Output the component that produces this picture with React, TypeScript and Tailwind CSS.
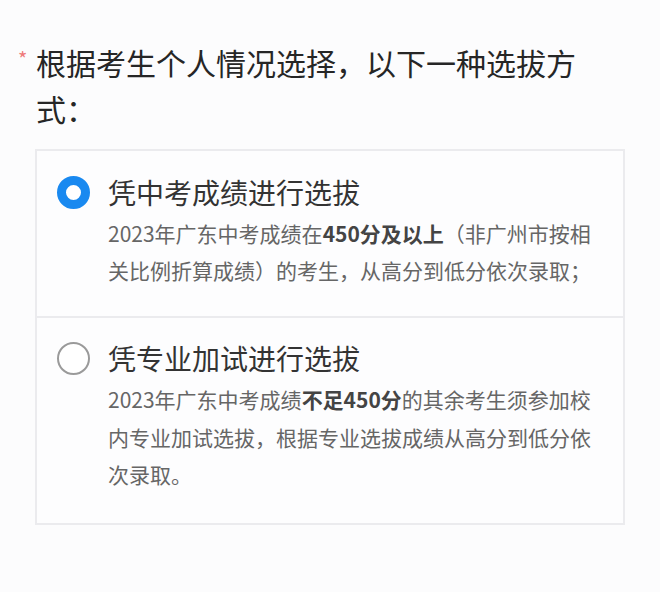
import React from "react";

const font = { fontFamily: '"Noto Sans CJK SC", "Noto Sans", sans-serif' };

function Radio({ checked }: { checked: boolean }) {
  return checked ? (
    <div className="w-[33px] h-[33px] rounded-full border-[9px] border-[#1989f0] bg-white box-border" />
  ) : (
    <div className="w-[33px] h-[33px] rounded-full border-2 border-[#9a9a9a] bg-white box-border" />
  );
}

export default function App() {
  return (
    <div className="w-[660px] h-[592px] bg-[#fcfcfd] overflow-hidden" style={font}>
      <div className="pt-[39px] pl-[36px] pr-[20px]">
        <div className="relative text-[30px] leading-[46px] text-[#262626]">
          <span className="absolute left-[-18px] top-[10px] text-[20px] leading-[20px] text-[#ef7a7a]">*</span>
          根据考生个人情况选择，以下一种选拔方
          <br />
          式：
        </div>
      </div>
      <div className="ml-[35px] mt-[18px] w-[590px] border-2 border-[#ebebee] bg-[#fdfdfe]">
        <div className="flex pl-[20px] pt-[21px] pb-[27px] border-b-2 border-[#ebebee]">
          <div className="h-[40px] flex items-center">
            <Radio checked />
          </div>
          <div className="ml-[18px]">
            <div className="text-[28px] leading-[40px] text-[#333333]">凭中考成绩进行选拔</div>
            <div className="mt-[3px] text-[21px] leading-[37px] text-[#666666] whitespace-nowrap">
              2023年广东中考成绩在<span className="font-semibold text-[#444444]">450分及以上</span>（非广州市按相
              <br />
              关比例折算成绩）的考生，从高分到低分依次录取；
            </div>
          </div>
        </div>
        <div className="flex pl-[20px] pt-[20px] pb-[29px]">
          <div className="h-[40px] flex items-center">
            <Radio checked={false} />
          </div>
          <div className="ml-[18px]">
            <div className="text-[28px] leading-[40px] text-[#333333]">凭专业加试进行选拔</div>
            <div className="mt-[3px] text-[21px] leading-[37.5px] text-[#666666] whitespace-nowrap">
              2023年广东中考成绩<span className="font-semibold text-[#444444]">不足450分</span>的其余考生须参加校
              <br />
              内专业加试选拔，根据专业选拔成绩从高分到低分依
              <br />
              次录取。
            </div>
          </div>
        </div>
      </div>
    </div>
  );
}
